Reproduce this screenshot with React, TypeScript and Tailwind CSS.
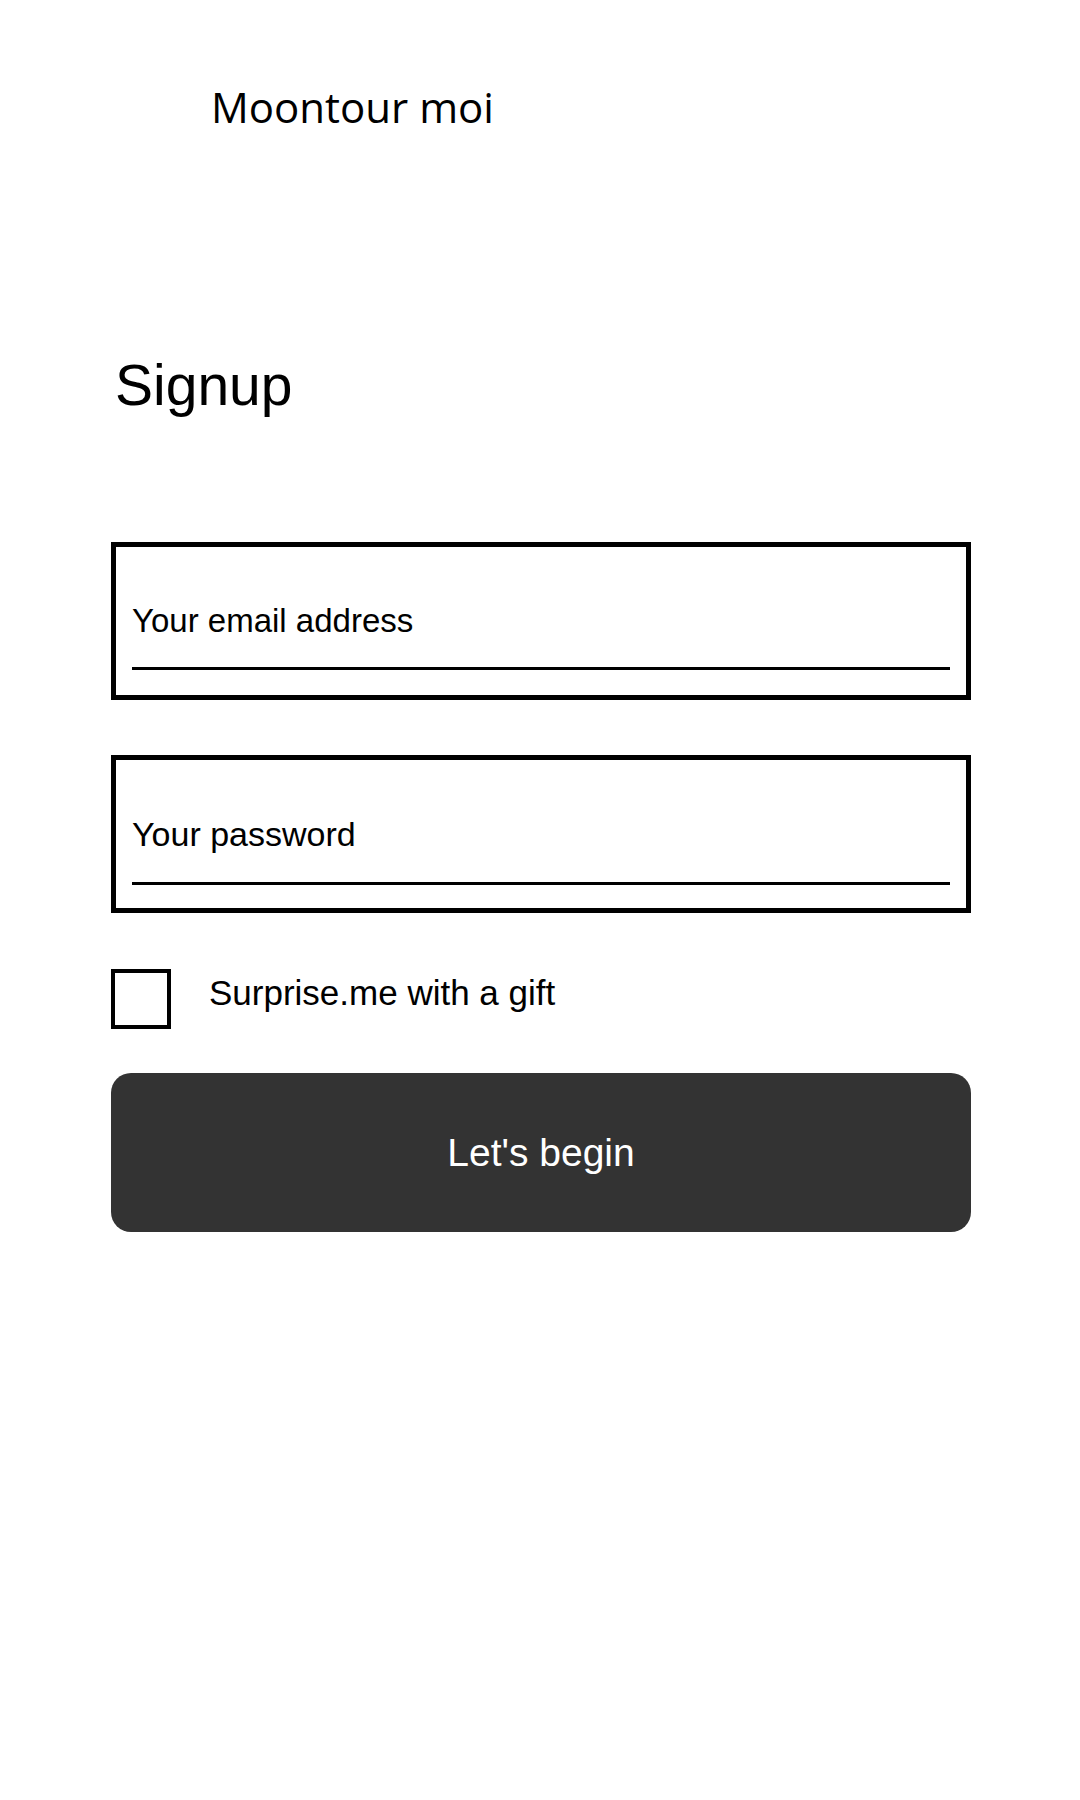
import { useState } from 'react';

interface FieldProps {
  label: string;
  textClass: string;
  padClass: string;
  lineClass: string;
}

function Field({ label, textClass, padClass, lineClass }: FieldProps) {
  return (
    <div className={`h-[158px] border-[5px] border-black px-4 ${padClass}`}>
      <p className={`leading-none text-black ${textClass}`}>{label}</p>
      <div className={`h-[3px] bg-black ${lineClass}`} />
    </div>
  );
}

export default function App() {
  const [gift, setGift] = useState(false);

  return (
    <div className="min-h-[1800px] bg-white font-['Liberation_Sans',Arial,sans-serif] text-black">
      <header className="pl-[211px] pt-[86px]">
        <h2 className="font-['Open_Sans',sans-serif] text-[42px] leading-none">
          Moontour moi
        </h2>
      </header>

      <main className="ml-[111px] w-[860px]">
        <h1 className="ml-[4px] mt-[229px] text-[57px] leading-none">Signup</h1>

        <div className="mt-[128px] flex flex-col gap-[55px]">
          <Field
            label="Your email address"
            textClass="text-[33px]"
            padClass="pt-[57px]"
            lineClass="mt-[30px]"
          />
          <Field
            label="Your password"
            textClass="text-[34px]"
            padClass="pt-[57px]"
            lineClass="mt-[31px]"
          />
        </div>

        <label className="mt-[56px] flex cursor-pointer items-start gap-[38px]">
          <button
            type="button"
            onClick={() => setGift(!gift)}
            className="h-[60px] w-[60px] border-4 border-black bg-white"
          />
          <span className="mt-[6px] text-[35px] leading-none">
            Surprise.me with a gift
          </span>
        </label>

        <button
          type="button"
          className="mt-[44px] flex h-[159px] w-full items-center justify-center rounded-[20px] bg-[#333333] text-[39px] leading-none text-white"
        >
          Let's begin
        </button>
      </main>
    </div>
  );
}
